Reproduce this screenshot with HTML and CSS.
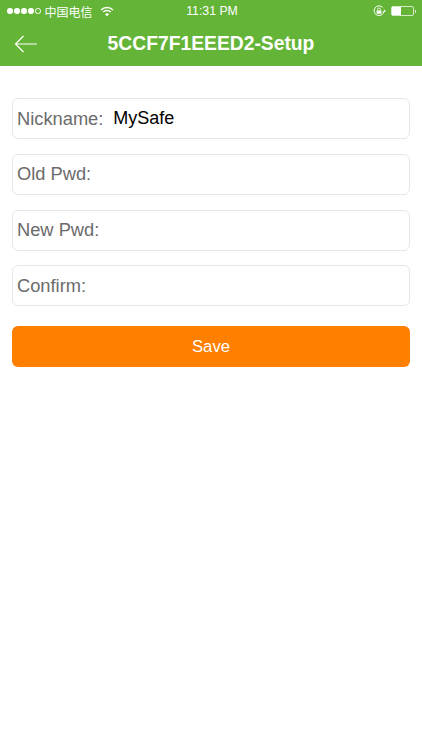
FILE: index.html
```html
<!DOCTYPE html>
<html lang="en">
<head>
  <meta charset="UTF-8">
  <meta name="viewport" content="width=device-width, initial-scale=1.0">
  <title>Setup</title>
  <link rel="stylesheet" href="styles.css">
</head>
<body>
  <header class="header">
    <div class="status-bar">
      <div class="status-left">
        <span class="signal">
          <i class="dot"></i><i class="dot"></i><i class="dot"></i><i class="dot"></i><i class="dot dot-empty"></i>
        </span>
        <span class="carrier">中国电信</span>
        <svg class="wifi" width="14" height="11" viewBox="0 0 14 11">
          <path d="M1 4 A8.5 8.5 0 0 1 13 4" fill="none" stroke="#fff" stroke-width="1.4"/>
          <path d="M3.1 6.1 A5.5 5.5 0 0 1 10.9 6.1" fill="none" stroke="#fff" stroke-width="1.4"/>
          <path d="M5 8.2 A2.8 2.8 0 0 1 9 8.2 L7 10.2 Z" fill="#fff"/>
        </svg>
      </div>
      <span class="time">11:31 PM</span>
      <div class="status-right">
        <svg class="lock" width="13" height="12" viewBox="0 0 13 12">
          <path d="M9.6 2.4 A4.9 4.9 0 1 0 10.9 6" fill="none" stroke="#fff" stroke-width="1"/>
          <path d="M10.9 4.4 L12.8 6 L10.9 7.6 Z" fill="#fff"/>
          <rect x="3.6" y="5.4" width="4.8" height="3.4" fill="#fff"/>
          <path d="M4.6 5.4 V4.4 A1.4 1.4 0 0 1 7.4 4.4 V5.4" fill="none" stroke="#fff" stroke-width="0.8"/>
        </svg>
        <span class="battery"><span class="battery-level"></span></span>
        <span class="battery-tip"></span>
      </div>
    </div>
    <div class="nav-bar">
      <svg class="back" width="24" height="18" viewBox="0 0 24 18">
        <path d="M23 9 H1.5 M9.5 1 L1.5 9 L9.5 17" fill="none" stroke="#fff" stroke-width="1.2"/>
      </svg>
      <h1 class="title">5CCF7F1EEED2-Setup</h1>
    </div>
  </header>

  <main class="form">
    <div class="field">
      <label class="field-label" for="nickname">Nickname:</label>
      <input class="field-input" id="nickname" type="text" value="MySafe">
    </div>
    <div class="field">
      <label class="field-label" for="oldPwd">Old Pwd:</label>
      <input class="field-input" id="oldPwd" type="password">
    </div>
    <div class="field">
      <label class="field-label" for="newPwd">New Pwd:</label>
      <input class="field-input" id="newPwd" type="password">
    </div>
    <div class="field">
      <label class="field-label" for="confirmPwd">Confirm:</label>
      <input class="field-input" id="confirmPwd" type="password">
    </div>
    <button class="save-btn" type="button">Save</button>
  </main>
</body>
</html>
```

FILE: styles.css
```css
* {
  margin: 0;
  padding: 0;
  box-sizing: border-box;
}

body {
  font-family: "Liberation Sans", Arial, "Noto Sans CJK SC", sans-serif;
  background: #fff;
  min-height: 100vh;
  color: #666;
}

.header {
  height: 66px;
  background: #64b437;
  color: #fff;
}

.status-bar {
  position: relative;
  display: flex;
  align-items: center;
  justify-content: space-between;
  height: 22px;
  padding: 0 6px 0 7px;
  font-size: 12px;
}

.status-left,
.status-right {
  display: flex;
  align-items: center;
}

.signal {
  display: flex;
  gap: 1.5px;
  margin-right: 4px;
}

.dot {
  width: 5.5px;
  height: 5.5px;
  border-radius: 50%;
  background: #fff;
}

.dot-empty {
  background: none;
  border: 1px solid #fff;
}

.carrier {
  font-family: "Noto Sans CJK SC", sans-serif;
  font-size: 12px;
  margin-right: 7px;
}

.time {
  position: absolute;
  left: 2px;
  right: 0;
  text-align: center;
  font-size: 12.3px;
}

.lock {
  margin-right: 5px;
}

.battery {
  display: block;
  width: 23px;
  height: 10px;
  border: 1px solid #d5ebc8;
  border-radius: 2px;
}

.battery-level {
  display: block;
  width: 9px;
  height: 8px;
  background: #fff;
}

.battery-tip {
  width: 1px;
  height: 3px;
  margin-left: 1px;
  background: #d5ebc8;
}

.nav-bar {
  position: relative;
  display: flex;
  align-items: center;
  height: 44px;
  padding-left: 14px;
}

.title {
  position: absolute;
  left: 0;
  right: 0;
  text-align: center;
  font-size: 19.3px;
  font-weight: 700;
}

.form {
  display: flex;
  flex-direction: column;
  gap: 14.8px;
  padding: 32px 12px 0;
}

.field {
  display: flex;
  align-items: center;
  height: 41px;
  padding: 0 4px;
  background: #fff;
  border: 1px solid #e6e6e6;
  border-radius: 6px;
}

.field-label {
  flex: none;
  font-size: 18.3px;
  color: #6b6b6b;
}

.field-input {
  flex: 1;
  min-width: 0;
  margin-left: 10px;
  border: none;
  outline: none;
  background: none;
  font-family: inherit;
  font-size: 18px;
  color: #000;
}

.save-btn {
  height: 41px;
  margin-top: 4.8px;
  padding-top: 2px;
  border: none;
  border-radius: 6px;
  background: #ff8000;
  color: #fff;
  font-family: inherit;
  font-size: 16.7px;
  cursor: pointer;
}
```
